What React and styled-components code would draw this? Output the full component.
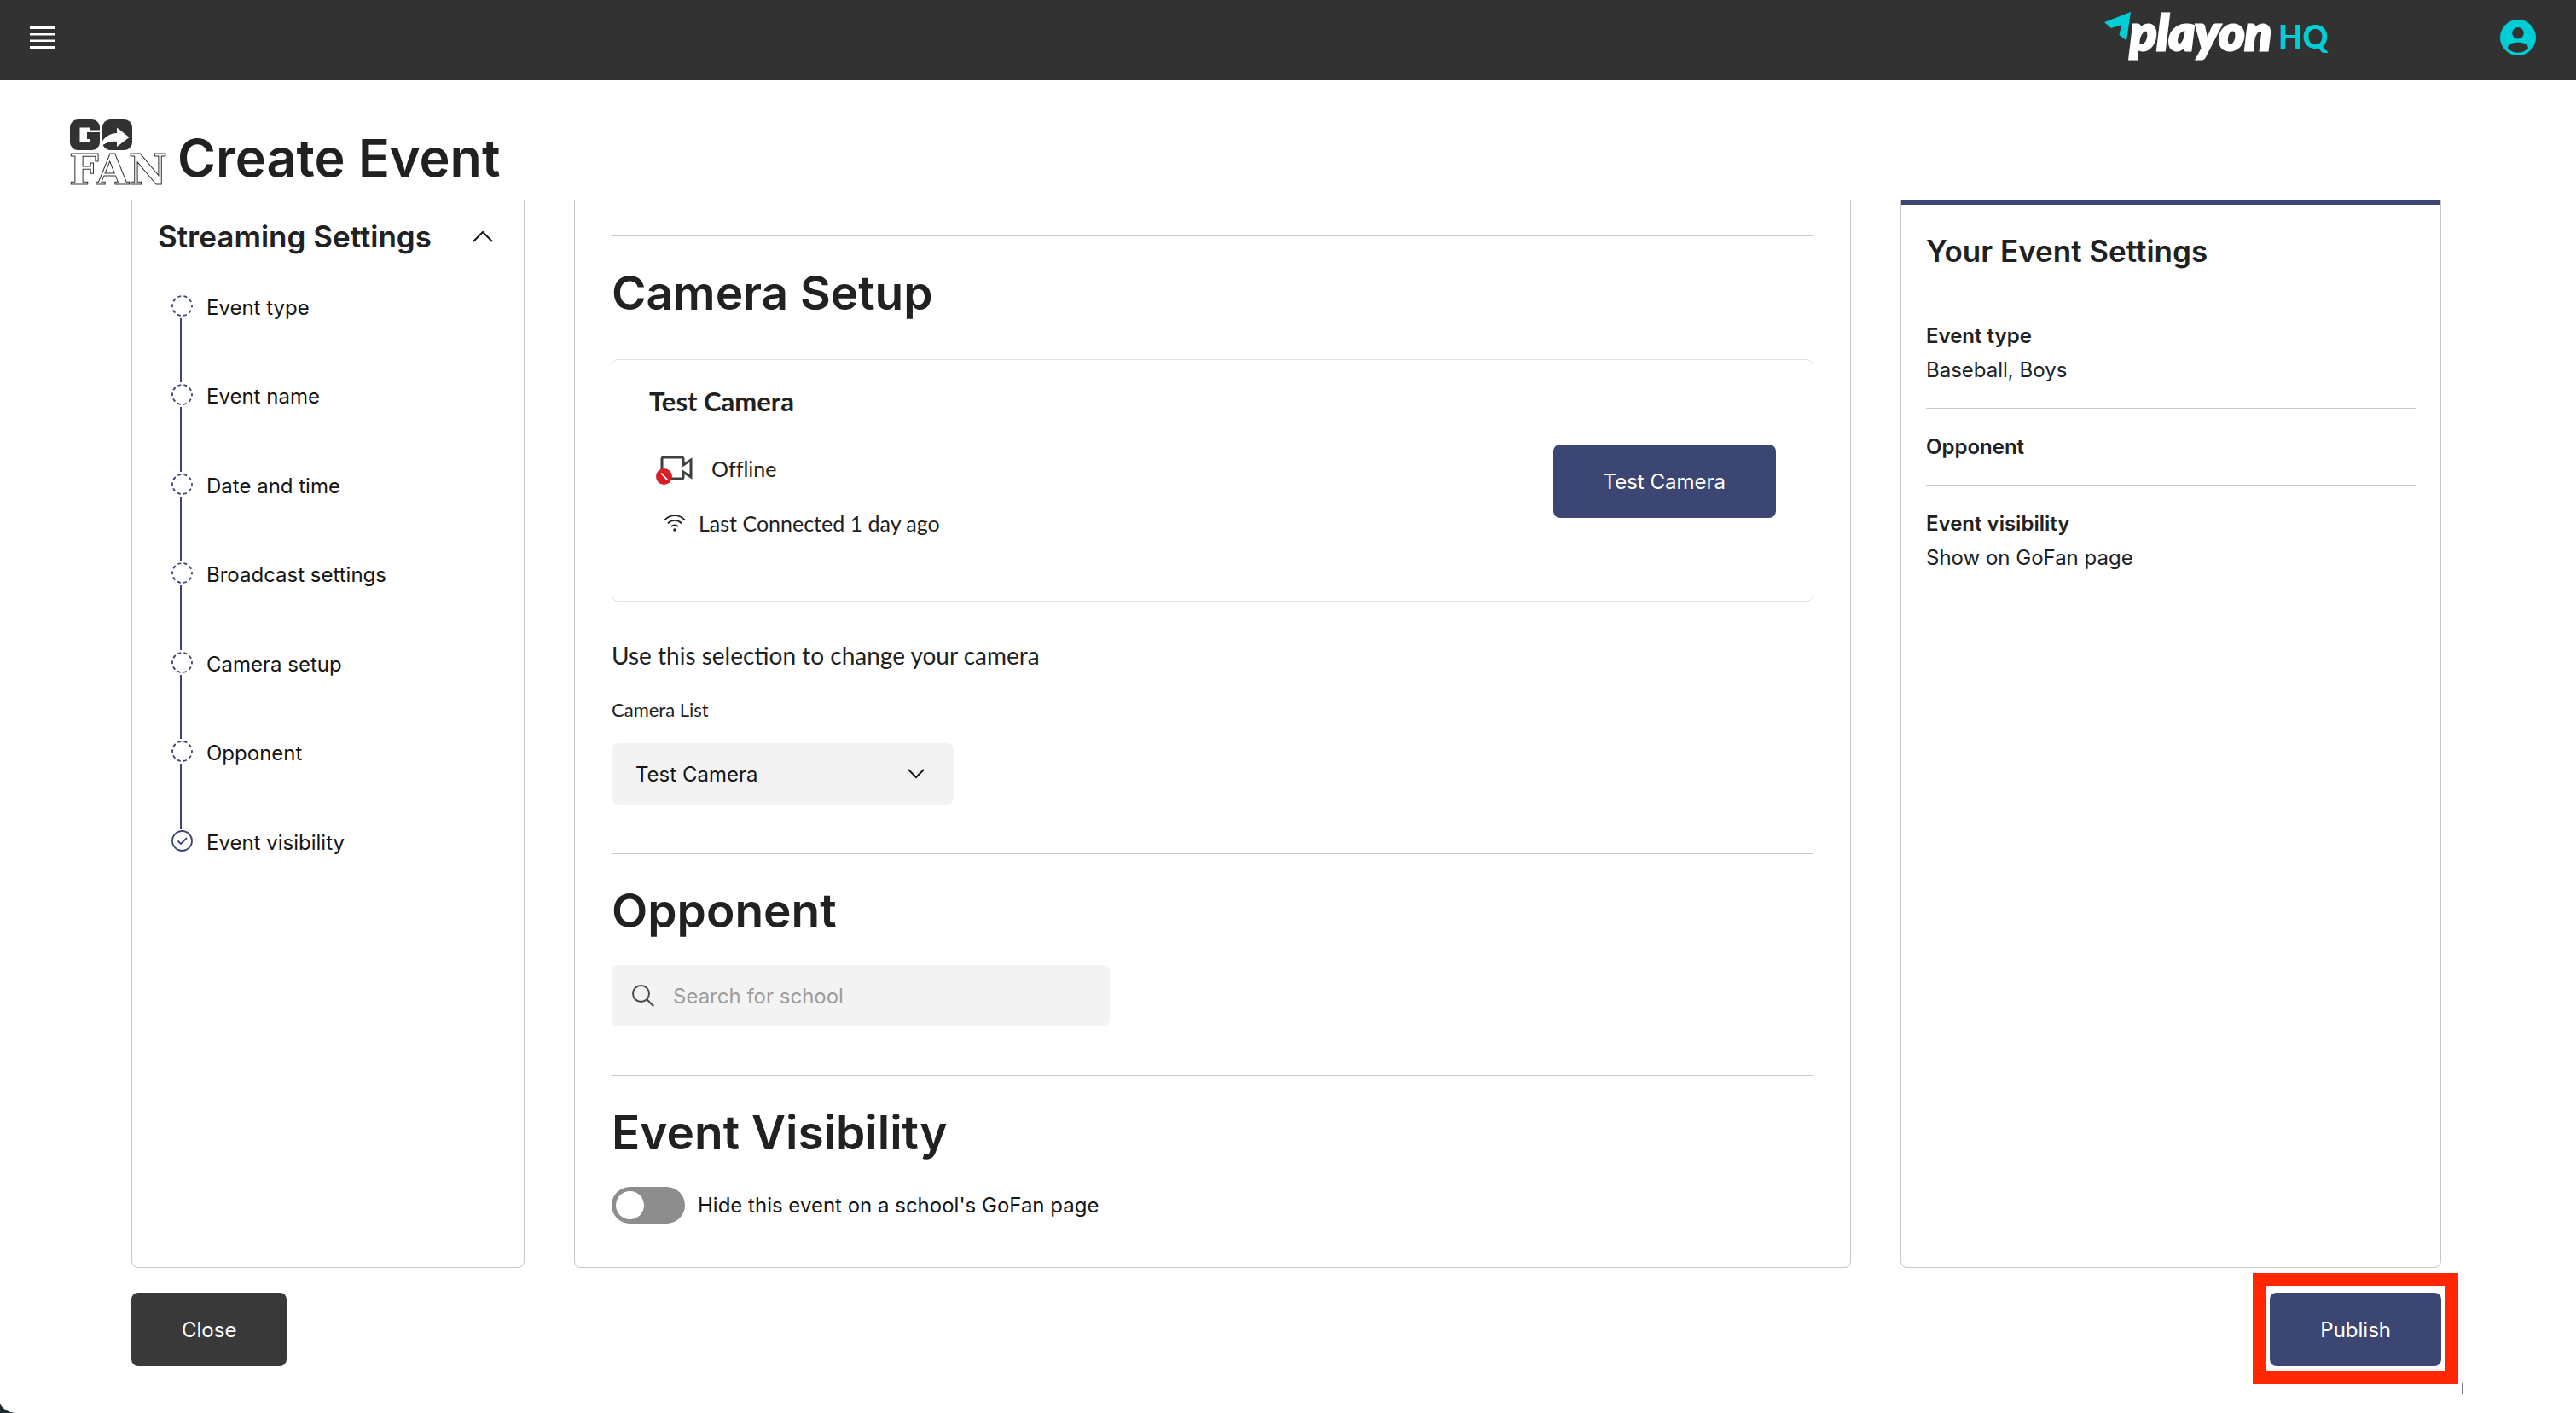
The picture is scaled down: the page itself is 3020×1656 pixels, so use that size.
import React from "react";
import styled, { createGlobalStyle, css } from "styled-components";

const sans = 'Inter, "Noto Sans", "Liberation Sans", sans-serif';
const lato = 'Lato, "Open Sans", "Liberation Sans", sans-serif';
const navy = "#3c4673";
const line = "#c8c8c8";

const GlobalStyle = createGlobalStyle`
  *, *::before, *::after { box-sizing: border-box; }
  body { margin: 0; background: #fff; color: #212121; font-family: ${sans}; font-size: 24px; }
  h1, h2, h3, p, ol, dl, dd { margin: 0; padding: 0; }
  svg { display: block; flex: none; overflow: visible; }
`;

const Page = styled.div`
  position: relative;
  min-height: 100vh;
  overflow: hidden;
`;

const TopBar = styled.header`
  display: flex;
  align-items: center;
  height: 94px;
  padding: 0 47px 6px 35px;
  background: #323232;
`;

const IconButton = styled.button`
  display: flex;
  padding: 0;
  border: 0;
  background: none;
  color: inherit;
  cursor: pointer;
`;

const BrandLink = styled.a`
  margin-left: auto;
  margin-right: 201px;
`;

const TitleBar = styled.div`
  display: flex;
  gap: 13px;
  padding: 46px 82px 4px;
`;

const PageTitle = styled.h1`
  font-size: 61px;
  line-height: 90px;
  font-weight: 600;
`;

const Columns = styled.div`
  display: grid;
  grid-template-columns: 461px minmax(0, 1fr) 634px;
  gap: 58px;
  padding: 0 158px 0 154px;
`;

const panel = css`
  border: 1px solid ${line};
  border-top: 0;
  border-radius: 0 0 8px 8px;
`;

const StepsPanel = styled.nav`
  ${panel}
  padding: 19px 36px 0 30px;
`;

const MainPanel = styled.main`
  ${panel}
  padding: 42px 43px 51px;
`;

const SummaryPanel = styled.aside`
  ${panel}
  padding: 0 29px;
  &::before {
    content: "";
    display: block;
    height: 6px;
    margin: 0 -29px 30px;
    background: ${navy};
  }
`;

const StepsHeader = styled.div`
  display: flex;
  align-items: center;
  justify-content: space-between;
`;

const PanelTitle = styled.h2`
  font-size: 35px;
  line-height: 48px;
  font-weight: 600;
`;

const StepList = styled.ol`
  display: grid;
  grid-template-rows: repeat(7, 1fr);
  height: 731px;
  margin-top: 45px;
  padding-left: 16px;
  list-style: none;
`;

const Step = styled.li`
  display: flex;
  gap: 16px;
`;

const Marker = styled.span`
  display: flex;
  flex-direction: column;
  width: 25px;
`;

const Connector = styled.span`
  flex: 1;
  width: 2px;
  margin: 2px 0 2px 10px;
  background: ${navy};
`;

const StepLink = styled.a`
  line-height: 30px;
  height: 30px;
  color: #161616;
  text-decoration: none;
`;

const Section = styled.section`
  padding: 34px 0 57px;
  border-top: 1px solid ${line};
  &:last-child { padding-bottom: 0; }
`;

const SectionTitle = styled.h2`
  margin-bottom: 32px;
  font-size: 55px;
  line-height: 64px;
  font-weight: 600;
`;

const CameraCard = styled.div`
  display: flex;
  align-items: center;
  justify-content: space-between;
  margin-top: 46px;
  padding: 30px 43px 74px;
  border: 1px solid #e0e0e0;
  border-radius: 8px;
  font-family: ${lato};
  > button { margin-top: 46px; }
`;

const CameraName = styled.h3`
  margin-bottom: 44px;
  font-size: 31px;
  line-height: 36px;
  font-weight: 700;
`;

const StatusRow = styled.p`
  display: flex;
  align-items: center;
  gap: ${(p) => p.$gap}px;
  padding-left: ${(p) => p.$indent}px;
  font-size: 25px;
  line-height: 34px;
  font-variant-ligatures: none;
  & + & { margin-top: 30px; }
`;

const Button = styled.button`
  position: relative;
  height: 86px;
  padding: 0 59px;
  border: 0;
  border-radius: 8px;
  background: ${(p) => (p.$dark ? "#393939" : navy)};
  color: #fff;
  font-family: ${sans};
  font-size: 24px;
  font-weight: 400;
  cursor: pointer;
`;

const Hint = styled.p`
  margin-top: 45px;
  font-family: ${lato};
  font-size: 28px;
  line-height: 36px;
`;

const FieldLabel = styled.label`
  display: block;
  margin: 32px 0 25px;
  font-family: ${lato};
  font-size: 22px;
  line-height: 28px;
`;

const Field = styled.div`
  position: relative;
  display: flex;
  align-items: center;
  width: ${(p) => p.$width}px;
  height: 72px;
  border-radius: 8px;
  background: #f3f3f3;
`;

const control = css`
  width: 100%;
  height: 100%;
  border: 0;
  background: none;
  font-family: ${sans};
  font-size: 24px;
  color: #161616;
  outline: none;
`;

const Select = styled.select`
  ${control}
  appearance: none;
  padding: 0 72px 0 28px;
`;

const SelectChevron = styled.svg`
  position: absolute;
  right: 34px;
  pointer-events: none;
`;

const SearchInput = styled.input`
  ${control}
  padding: 0 24px 0 22px;
  &::placeholder { color: #9c9c9c; opacity: 1; }
`;

const SearchIcon = styled.svg`
  margin-left: 24px;
`;

const ToggleLabel = styled.label`
  display: flex;
  align-items: center;
  gap: 15px;
  color: #161616;
`;

const Toggle = styled.input`
  appearance: none;
  flex: none;
  width: 86px;
  height: 43px;
  margin: 0;
  padding: 5px;
  border-radius: 22px;
  background: #8d8d8d;
  &::before {
    content: "";
    display: block;
    width: 33px;
    height: 33px;
    border-radius: 50%;
    background: #fff;
  }
  &:checked::before { margin-left: auto; }
`;

const Summary = styled.dl`
  margin-top: 31px;
`;

const SummaryItem = styled.div`
  padding: 25px 0 24px;
  line-height: 40px;
  & + & { border-top: 1px solid ${line}; }
  dt { font-weight: 600; }
`;

const Footer = styled.footer`
  display: flex;
  justify-content: space-between;
  padding: 29px 158px 54px 154px;
`;

const Highlight = styled.span`
  position: absolute;
  inset: -23px -20px -21px -20px;
  border: 15px solid #ff2600;
  pointer-events: none;
`;

const WindowCorner = styled.svg`
  position: absolute;
  left: 0;
  bottom: 0;
`;

const WidgetEdge = styled.span`
  position: absolute;
  right: 132px;
  bottom: 21px;
  width: 2px;
  height: 15px;
  border-radius: 2px 0 0 2px;
  background: #77778a;
`;

const steps = [
  "Event type",
  "Event name",
  "Date and time",
  "Broadcast settings",
  "Camera setup",
  "Opponent",
  "Event visibility",
];

const summary = [
  { label: "Event type", value: "Baseball, Boys" },
  { label: "Opponent" },
  { label: "Event visibility", value: "Show on GoFan page" },
];

function MenuIcon() {
  return (
    <svg width="30" height="26" viewBox="0 0 30 26" fill="#fff" aria-hidden="true">
      <path d="M0 0h30v3H0zM0 8h30v2.500H0zM0 15.500h30V18H0zM0 23h30v3H0z" />
    </svg>
  );
}

function PlayonLogo() {
  return (
    <svg width="263" height="60" viewBox="0 0 263 60" role="img" aria-label="playon HQ">
      <path d="M0 12 31 0 26 33.500 17.500 27 20 15 8 19z" fill="#00ced6" />
      <text
        x="30"
        y="45"
        fill="#fff"
        stroke="#fff"
        strokeWidth="3"
        fontFamily={lato}
        fontSize="58"
        fontWeight="900"
        fontStyle="italic"
      >
        playon
      </text>
      <text x="204" y="43" fill="#00ced6" fontFamily={lato} fontSize="37" fontWeight="900">
        HQ
      </text>
    </svg>
  );
}

function UserIcon() {
  return (
    <svg width="42" height="42" viewBox="0 0 42 42" aria-hidden="true">
      <circle cx="21" cy="21" r="21" fill="#00ced6" />
      <circle cx="21" cy="15.700" r="6.800" fill="#323232" />
      <path d="M9 33.500c0-4.500 5-6.800 12-6.800s12 2.300 12 6.800c-3.200 3.500-7.500 5.300-12 5.300S12.200 37 9 33.500z" fill="#323232" />
    </svg>
  );
}

function GoFanLogo() {
  return (
    <svg width="113" height="77" viewBox="0 0 113 77" role="img" aria-label="GoFan">
      <rect width="35" height="36" rx="9" fill="#323232" />
      <path d="M11.500 9.500h12v3H36v2.500H20v8h3.500v4h-12z" fill="#fff" />
      <rect x="38" width="35" height="36" rx="9" fill="#323232" />
      <path d="M36 29C40 20 48 16 55 16V9.500L69.500 21 55 32v-6c-7-1-13 1-19 6z" fill="#fff" />
      <text x="-1" y="76" fill="#fff" stroke="#323232" strokeWidth="1" fontFamily='"DejaVu Serif", serif' fontSize="49" fontWeight="700">
        FAN
      </text>
    </svg>
  );
}

function StepIcon({ done }) {
  return (
    <svg width="25" height="25" viewBox="0 0 25 25" fill="none" stroke={navy} strokeWidth="1.800" aria-hidden="true">
      {done ? (
        <>
          <circle cx="12.500" cy="12.500" r="11.500" />
          <path d="M7.500 12.500l3.500 3.500 7-7" />
        </>
      ) : (
        <circle cx="12.500" cy="12.500" r="11.500" strokeDasharray="4 3.225" strokeDashoffset="2" />
      )}
    </svg>
  );
}

function CameraOffIcon() {
  return (
    <svg width="44" height="34" viewBox="0 -2 44 34" aria-hidden="true">
      <path
        d="M9 2h21q2 0 2 2v7l9-6v20l-9-6v6q0 2-2 2H9q-2 0-2-2V4q0-2 2-2z"
        fill="none"
        stroke="#3f3f3f"
        strokeWidth="3"
      />
      <circle cx="9.500" cy="24.500" r="9.500" fill="#da1e28" />
      <path d="M6 20.500l7.500 8" stroke="#fff" strokeWidth="1.800" />
    </svg>
  );
}

function WifiIcon() {
  return (
    <svg width="26" height="20" viewBox="0 0 26 20" fill="none" stroke="#212121" strokeWidth="1.800" aria-hidden="true">
      <path d="M1 6.500C8-.8 18-.8 25 6.500M5 10.300c4.600-4.600 11.400-4.600 16 0M9 14c2.300-2.200 5.700-2.200 8 0" />
      <circle cx="13" cy="18" r="1.800" fill="#212121" stroke="none" />
    </svg>
  );
}

export default function App() {
  return (
    <Page>
      <GlobalStyle />
      <TopBar>
        <IconButton type="button" aria-label="Open menu">
          <MenuIcon />
        </IconButton>
        <BrandLink href="#home">
          <PlayonLogo />
        </BrandLink>
        <IconButton type="button" aria-label="Account">
          <UserIcon />
        </IconButton>
      </TopBar>

      <TitleBar>
        <GoFanLogo />
        <PageTitle>Create Event</PageTitle>
      </TitleBar>

      <Columns>
        <StepsPanel aria-label="Streaming settings">
          <StepsHeader>
            <PanelTitle>Streaming Settings</PanelTitle>
            <IconButton type="button" aria-label="Collapse">
              <svg width="24" height="14" viewBox="0 0 24 14" fill="none" stroke="#161616" strokeWidth="2">
                <path d="M1 13 12 2l11 11" />
              </svg>
            </IconButton>
          </StepsHeader>
          <StepList>
            {steps.map((name, i) => {
              const last = i === steps.length - 1;
              return (
                <Step key={name}>
                  <Marker>
                    <StepIcon done={last} />
                    {!last && <Connector />}
                  </Marker>
                  <StepLink href={`#step-${i + 1}`}>{name}</StepLink>
                </Step>
              );
            })}
          </StepList>
        </StepsPanel>

        <MainPanel>
          <Section>
            <SectionTitle>Camera Setup</SectionTitle>
            <CameraCard>
              <div>
                <CameraName>Test Camera</CameraName>
                <StatusRow $indent={8} $gap={21}>
                  <CameraOffIcon />
                  Offline
                </StatusRow>
                <StatusRow $indent={17} $gap={15}>
                  <WifiIcon />
                  Last Connected 1 day ago
                </StatusRow>
              </div>
              <Button type="button">Test Camera</Button>
            </CameraCard>
            <Hint>Use this selection to change your camera</Hint>
            <FieldLabel htmlFor="camera">Camera List</FieldLabel>
            <Field $width={401}>
              <Select id="camera" defaultValue="test">
                <option value="test">Test Camera</option>
              </Select>
              <SelectChevron width="20" height="12" viewBox="0 0 20 12" fill="none" stroke="#161616" strokeWidth="2">
                <path d="M1 1l9 9 9-9" />
              </SelectChevron>
            </Field>
          </Section>

          <Section>
            <SectionTitle>Opponent</SectionTitle>
            <Field $width={584}>
              <SearchIcon width="26" height="26" viewBox="0 0 26 26" fill="none" stroke="#4a4a4a" strokeWidth="2" aria-hidden="true">
                <circle cx="10.500" cy="10.500" r="9.500" />
                <path d="M17.300 17.300 25.300 25.300" />
              </SearchIcon>
              <SearchInput type="search" placeholder="Search for school" aria-label="Search for school" />
            </Field>
          </Section>

          <Section>
            <SectionTitle>Event Visibility</SectionTitle>
            <ToggleLabel>
              <Toggle type="checkbox" />
              Hide this event on a school's GoFan page
            </ToggleLabel>
          </Section>
        </MainPanel>

        <SummaryPanel>
          <PanelTitle>Your Event Settings</PanelTitle>
          <Summary>
            {summary.map((item) => (
              <SummaryItem key={item.label}>
                <dt>{item.label}</dt>
                {item.value && <dd>{item.value}</dd>}
              </SummaryItem>
            ))}
          </Summary>
        </SummaryPanel>
      </Columns>

      <Footer>
        <Button type="button" $dark>
          Close
        </Button>
        <Button type="button">
          Publish
          <Highlight />
        </Button>
      </Footer>

      <WidgetEdge />
      <WindowCorner width="18" height="11" viewBox="0 0 18 11" aria-hidden="true">
        <path d="M0 0C3 6 9 10 18 11H0z" fill="#1d2b33" />
      </WindowCorner>
    </Page>
  );
}
